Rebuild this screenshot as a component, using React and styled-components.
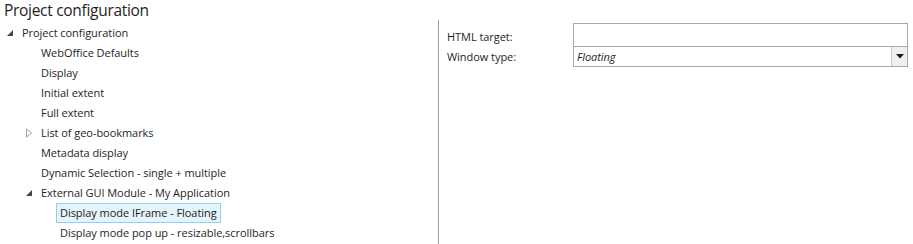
import React from "react";
import styled, { createGlobalStyle } from "styled-components";

const Global = createGlobalStyle`
  html, body { margin: 0; padding: 0; background: #fff; }
  body { font-family: "Open Sans", "Noto Sans", sans-serif; color: #1e1e1e; }
`;

const Page = styled.div`
  width: 913px;
  height: 244px;
  display: flex;
  flex-direction: column;
  overflow: hidden;
`;

const Title = styled.div`
  font-size: 15.5px;
  line-height: 20px;
  padding-left: 4px;
  height: 20px;
  color: #1e1e1e;
  letter-spacing: -0.3px;
`;

const Body = styled.div`
  flex: 1;
  display: flex;
`;

const TreePane = styled.div`
  width: 438px;
  padding-top: 3px;
  border-right: 1px solid #a0a0a0;
`;

const Row = styled.div`
  height: 20px;
  display: flex;
  align-items: center;
  padding-left: ${(p) => 5 + p.$level * 19}px;
`;

const Toggle = styled.span`
  width: 16px;
  display: flex;
  align-items: center;
  justify-content: flex-start;
  flex: none;
  padding-left: 1px;
  box-sizing: border-box;
`;

const Label = styled.span`
  font-size: 11px;
  line-height: 18px;
  padding: 0 3px;
  margin-left: -3px;
  border: 1px solid ${(p) => (p.$selected ? "#8fd0f3" : "transparent")};
  background: ${(p) => (p.$selected ? "#e5f3fb" : "transparent")};
  white-space: nowrap;
  letter-spacing: -0.05px;
`;

const FormPane = styled.div`
  flex: 1;
  padding: 3px 5px 0 8px;
`;

const FormGrid = styled.div`
  display: grid;
  grid-template-columns: 126px 1fr;
`;

const FieldLabel = styled.div`
  font-size: 11px;
  display: flex;
  align-items: center;
  height: ${(p) => p.$h}px;
  letter-spacing: -0.05px;
  padding-top: ${(p) => p.$pt || 0}px;
  box-sizing: border-box;
`;

const TextBox = styled.div`
  height: 22px;
  border: 1px solid #a9a9a9;
  border-bottom: none;
  background: #fff;
`;

const Select = styled.div`
  height: 19px;
  border: 1px solid #a9a9a9;
  display: flex;
  align-items: stretch;
  background: #fff;
`;

const SelectValue = styled.div`
  flex: 1;
  font-size: 11px;
  font-style: italic;
  display: flex;
  align-items: center;
  padding-left: 3px;
  letter-spacing: -0.05px;
`;

const DropButton = styled.div`
  width: 15px;
  background: #f0f0f0;
  border-left: 1px solid #c8c8c8;
  display: flex;
  align-items: center;
  justify-content: center;
`;

const Expanded = () => (
  <svg width="8" height="8" viewBox="0 0 8 8">
    <polygon points="7,1 7,7 1,7" fill="#454545" />
  </svg>
);

const Collapsed = () => (
  <svg width="8" height="10" viewBox="0 0 8 10">
    <polygon points="1.5,1 6.5,5 1.5,9" fill="#fff" stroke="#a0a0a0" strokeWidth="1" />
  </svg>
);

const items = [
  { level: 0, text: "Project configuration", toggle: "open" },
  { level: 1, text: "WebOffice Defaults" },
  { level: 1, text: "Display" },
  { level: 1, text: "Initial extent" },
  { level: 1, text: "Full extent" },
  { level: 1, text: "List of geo-bookmarks", toggle: "closed" },
  { level: 1, text: "Metadata display" },
  { level: 1, text: "Dynamic Selection - single + multiple" },
  { level: 1, text: "External GUI Module - My Application", toggle: "open" },
  { level: 2, text: "Display mode IFrame - Floating", selected: true },
  { level: 2, text: "Display mode pop up - resizable,scrollbars" },
];

export default function App() {
  return (
    <Page>
      <Global />
      <Title>Project configuration</Title>
      <Body>
        <TreePane>
          {items.map((it, i) => (
            <Row key={i} $level={it.level}>
              <Toggle>
                {it.toggle === "open" && <Expanded />}
                {it.toggle === "closed" && <Collapsed />}
              </Toggle>
              <Label $selected={it.selected}>{it.text}</Label>
            </Row>
          ))}
        </TreePane>
        <FormPane>
          <FormGrid>
            <FieldLabel $h={23} $pt={3}>HTML target:</FieldLabel>
            <TextBox />
            <FieldLabel $h={20}>Window type:</FieldLabel>
            <Select>
              <SelectValue>Floating</SelectValue>
              <DropButton>
                <svg width="8" height="5" viewBox="0 0 8 5">
                  <polygon points="0,0 8,0 4,4.5" fill="#1a1a1a" />
                </svg>
              </DropButton>
            </Select>
          </FormGrid>
        </FormPane>
      </Body>
    </Page>
  );
}
